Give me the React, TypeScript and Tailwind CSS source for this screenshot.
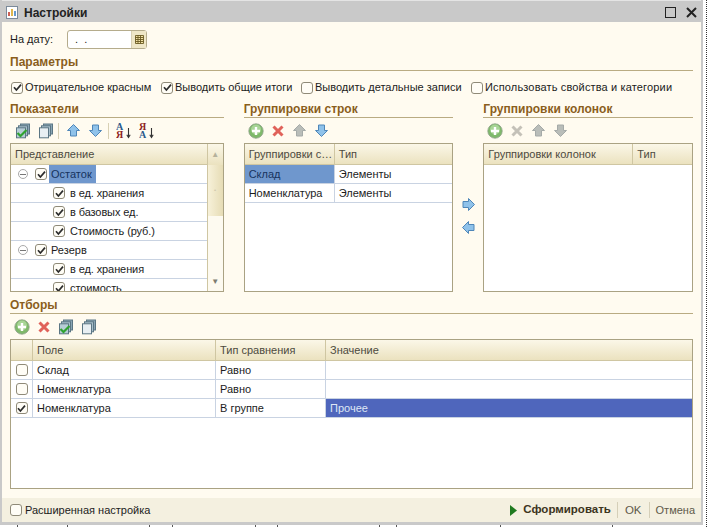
import type { ReactNode } from 'react';

const font = { fontFamily: '"Liberation Sans", Arial, sans-serif' };

function Check({ on = false }: { on?: boolean }) {
  return (
    <span className="flex h-[12px] w-[12px] shrink-0 items-center justify-center rounded-[3px] border border-[#8f8a78] bg-[#fffdf6]">
      {on && (
        <svg width="9" height="9" viewBox="0 0 9 9">
          <path d="M1 4.2 L3.4 7 L8 1.6" fill="none" stroke="#2c2c2c" strokeWidth="1.7" />
        </svg>
      )}
    </span>
  );
}

function Plus() {
  return (
    <svg width="16" height="16" viewBox="0 0 16 16">
      <circle cx="8" cy="8" r="7.2" fill="#7fb96b" stroke="#8c9f88" strokeWidth="0.8" />
      <circle cx="8" cy="6.5" r="5" fill="#a8d596" />
      <path d="M8 4v8M4 8h8" stroke="#fff" strokeWidth="2.4" />
    </svg>
  );
}

function Cross({ off = false }: { off?: boolean }) {
  return (
    <svg width="14" height="14" viewBox="0 0 14 14">
      <path d="M2.5 2.5 L11.5 11.5 M11.5 2.5 L2.5 11.5" stroke={off ? '#c4c1b8' : '#e0625a'} strokeWidth="3" />
    </svg>
  );
}

function Arrow({ dir, off = false }: { dir: 'up' | 'down' | 'left' | 'right'; off?: boolean }) {
  const rot = { up: 0, down: 180, left: 270, right: 90 }[dir];
  return (
    <svg width="15" height="15" viewBox="0 0 15 15" style={{ transform: `rotate(${rot}deg)` }}>
      <path
        d="M7.5 1.5 L13.5 7.5 L10.5 7.5 L10.5 13 L4.5 13 L4.5 7.5 L1.5 7.5 Z"
        fill={off ? '#b9bdb9' : '#8fc2ea'}
        stroke={off ? '#a5aaa8' : '#4f86b8'}
        strokeWidth="1"
      />
    </svg>
  );
}

function Stack({ checked = false }: { checked?: boolean }) {
  return (
    <svg width="16" height="16" viewBox="0 0 16 16">
      <rect x="5.5" y="1" width="9" height="10" fill="#8aa6b5" stroke="#5b7684" />
      <rect x="3.5" y="2.8" width="9" height="10" fill="#a9c0cc" stroke="#5b7684" />
      <rect x="1.5" y="4.8" width="9" height="10" fill={checked ? '#b7cdd6' : '#e8eff3'} stroke="#5b7684" />
      {checked && <path d="M2.5 10 L5.5 13 L11.5 7" fill="none" stroke="#2fa32f" strokeWidth="2.2" />}
    </svg>
  );
}

function Sort({ reverse = false }: { reverse?: boolean }) {
  const first = reverse ? 'Я' : 'А';
  const second = reverse ? 'А' : 'Я';
  const c1 = reverse ? '#8e1f1f' : '#2a5a8c';
  const c2 = reverse ? '#2a5a8c' : '#8e1f1f';
  return (
    <svg width="16" height="17" viewBox="0 0 16 17">
      <text x="0" y="8" fontSize="10" fontFamily="Liberation Serif" fontWeight="bold" fill={c1}>{first}</text>
      <text x="0" y="16" fontSize="10" fontFamily="Liberation Serif" fontWeight="bold" fill={c2}>{second}</text>
      <path d="M12.5 6v9M10.8 12.8 12.5 15.5 14.2 12.8" fill="none" stroke="#333" strokeWidth="1.1" />
    </svg>
  );
}

function Heading({ children }: { children: ReactNode }) {
  return (
    <div className="h-[15px] border-b border-[#b9ab82] text-[12px] font-bold leading-[13px] text-[#8a5e1c]">
      {children}
    </div>
  );
}

function Toolbar({ children, className = '' }: { children: ReactNode; className?: string }) {
  return <div className={`flex h-[25px] items-center ${className}`}>{children}</div>;
}

function HeadCell({ children, className = '' }: { children?: ReactNode; className?: string }) {
  return (
    <div className={`flex items-center whitespace-nowrap border-r border-[#cfc6a2] px-[4px] text-[#4d4a40] last:border-r-0 ${className}`}>
      {children}
    </div>
  );
}

const headBar = 'flex h-[21px] shrink-0 border-b border-[#cfc6a2] bg-gradient-to-b from-[#fbf7e8] to-[#ebe2bf]';

function TreeRow({ label, parent = false, selected = false }: { label: string; parent?: boolean; selected?: boolean }) {
  return (
    <div className={`flex h-[19px] shrink-0 items-center border-b border-[#c9d3e2] ${parent ? 'pl-[7px]' : 'pl-[42px] tracking-[-0.1px]'}`}>
      {parent && (
        <span className="mr-[7px] flex h-[10px] w-[10px] items-center justify-center rounded-full border border-[#a9a9a9]">
          <span className="h-px w-[6px] bg-[#777]" />
        </span>
      )}
      <Check on />
      <span className={`leading-[18px] ${parent ? 'ml-[2px] px-[2px]' : 'ml-[4px] px-[1px]'} ${selected ? 'bg-[#6f97cd] pr-[4px] text-[#16335e]' : ''}`}>{label}</span>
    </div>
  );
}

function GroupTable({ first, firstWidth, col, rows }: { first: string; firstWidth: string; col: string; rows: [string, string][] }) {
  return (
    <div className="h-[149px] border border-[#aaa283] bg-white">
      <div className={headBar}>
        <HeadCell className={firstWidth}>{first}</HeadCell>
        <HeadCell className="flex-1">{col}</HeadCell>
      </div>
      {rows.map(([a, b], i) => (
        <div key={a} className="flex h-[19px] border-b border-[#c9d3e2]">
          <div className={`${firstWidth} border-r border-[#c9d3e2] px-[4px] leading-[18px] ${i === 0 ? 'bg-[#6f97cd] text-[#17345f]' : ''}`}>{a}</div>
          <div className="flex-1 px-[4px] leading-[18px]">{b}</div>
        </div>
      ))}
    </div>
  );
}

const filters: [boolean, string, string, string][] = [
  [false, 'Склад', 'Равно', ''],
  [false, 'Номенклатура', 'Равно', ''],
  [true, 'Номенклатура', 'В группе', 'Прочее'],
];

// обрывки окна, что лежит под диалогом
const ticks = [17, 67, 149, 172, 255, 277, 379, 396, 500, 612];

export default function App() {
  return (
    <div className="flex h-[527px] w-[707px] flex-col overflow-hidden border-r border-dotted border-[#333] bg-white text-[11px] text-[#1c1c1c]" style={font}>
      <div className="flex h-[525px] w-[703px] shrink-0 flex-col border-b-[3px] border-l-2 border-r-2 border-[#c9c9c9] bg-[#fffbf0]">
        {/* заголовок */}
        <div className="flex h-[22px] shrink-0 items-center border-t border-[#e4e4e4] bg-[#c9c9c9] pl-[4px] pr-[4px] pt-[2px]">
          <svg width="12" height="13" viewBox="0 0 12 13">
            <rect x="0.5" y="0.5" width="11" height="12" fill="#fff" stroke="#7b8a9a" />
            <path d="M3 10V6" stroke="#c0392b" strokeWidth="1.6" />
            <path d="M6 10V3" stroke="#d9a520" strokeWidth="1.6" />
            <path d="M9 10V5" stroke="#3f7fc0" strokeWidth="1.6" />
          </svg>
          <span className="ml-[6px] text-[12px] font-bold text-[#222]">Настройки</span>
          <svg className="ml-auto" width="11" height="11" viewBox="0 0 11 11">
            <rect x="0.5" y="0.5" width="10" height="10" fill="none" stroke="#222" />
          </svg>
          <svg className="ml-[10px]" width="11" height="11" viewBox="0 0 11 11">
            <path d="M1 1L10 10M10 1L1 10" stroke="#222" strokeWidth="2" />
          </svg>
        </div>

        <div className="flex min-h-0 flex-1 flex-col px-[8px] pt-[8px]">
          <div className="flex h-[18px] items-center">
            <span className="w-[57px]">На дату:</span>
            <div className="flex h-[19px] w-[80px] items-center rounded-[3px] border border-[#b5ac8c] bg-white">
              <span className="flex-1 whitespace-pre pl-[7px] text-[11px]">.  .</span>
              <span className="flex h-full w-[15px] items-center justify-center border-l border-[#d8d0b4] bg-[#efe7c8]">
                <svg width="11" height="11" viewBox="0 0 11 11">
                  <path d="M1.5 1.5h8v8h-8zM1.5 3.5h8M1.5 5.5h8M1.5 7.5h8M4 1.5v8M6.5 1.5v8" fill="#f3e3a8" stroke="#6a5a22" strokeWidth="0.9" />
                </svg>
              </span>
            </div>
          </div>

          <div className="mt-[8px]"><Heading>Параметры</Heading></div>
          <div className="mt-[9px] flex h-[15px] items-center pl-[1px]">
            <label className="flex w-[150px] items-center gap-[2px]"><Check on />Отрицательное красным</label>
            <label className="flex w-[140px] items-center gap-[2px]"><Check on />Выводить общие итоги</label>
            <label className="flex w-[170px] items-center gap-[2px]"><Check />Выводить детальные записи</label>
            <label className="flex items-center gap-[2px] tracking-[0.15px]"><Check />Использовать свойства и категории</label>
          </div>

          <div className="mt-[8px] flex">
            <div className="w-[214px]">
              <Heading>Показатели</Heading>
              <Toolbar className="gap-[7px] pl-[5px]">
                <Stack checked />
                <Stack />
                <span className="-ml-[3px] h-[16px] w-px bg-[#d8d0b4]" />
                <Arrow dir="up" />
                <Arrow dir="down" />
                <span className="-ml-[2px] h-[16px] w-px bg-[#d8d0b4]" />
                <Sort />
                <Sort reverse />
              </Toolbar>
              <div className="flex h-[149px] border border-[#aaa283] bg-white">
                <div className="flex min-w-0 flex-1 flex-col overflow-hidden">
                  <div className={headBar}><HeadCell className="flex-1">Представление</HeadCell></div>
                  <TreeRow parent selected label="Остаток" />
                  <TreeRow label="в ед. хранения" />
                  <TreeRow label="в базовых ед." />
                  <TreeRow label="Стоимость (руб.)" />
                  <TreeRow parent label="Резерв" />
                  <TreeRow label="в ед. хранения" />
                  <TreeRow label="стоимость" />
                </div>
                <div className="flex w-[16px] shrink-0 flex-col border-l border-[#cfc6a2] bg-[#fdfaf0]">
                  <div className="flex h-[21px] items-center justify-center bg-gradient-to-b from-[#fbf7e8] to-[#ebe2bf] text-[8px] text-[#b5b19c]">▲</div>
                  <div className="flex h-[51px] items-center justify-center bg-gradient-to-r from-[#f7f1d9] to-[#e6dcb5] text-[6px] text-[#cfc8ac]">•</div>
                  <div className="flex-1" />
                  <div className="flex h-[18px] items-center justify-center text-[8px] text-[#7c7c70]">▼</div>
                </div>
              </div>
            </div>

            <div className="ml-[20px] w-[210px]">
              <Heading>Группировки строк</Heading>
              <Toolbar className="gap-[7px] pl-[4px]">
                <Plus />
                <Cross />
                <Arrow dir="up" off />
                <Arrow dir="down" />
              </Toolbar>
              <GroupTable first="Группировки с…" firstWidth="w-[90px]" col="Тип" rows={[['Склад', 'Элементы'], ['Номенклатура', 'Элементы']]} />
            </div>

            <div className="flex w-[30px] flex-col items-center gap-[8px] pt-[94px]">
              <Arrow dir="right" />
              <Arrow dir="left" />
            </div>

            <div className="w-[210px]">
              <Heading>Группировки колонок</Heading>
              <Toolbar className="gap-[7px] pl-[4px]">
                <Plus />
                <Cross off />
                <Arrow dir="up" off />
                <Arrow dir="down" off />
              </Toolbar>
              <GroupTable first="Группировки колонок" firstWidth="w-[149px]" col="Тип" rows={[]} />
            </div>
          </div>

          <div className="mt-[7px]"><Heading>Отборы</Heading></div>
          <Toolbar className="gap-[7px] pl-[4px]">
            <Plus />
            <Cross />
            <Stack checked />
            <Stack />
          </Toolbar>
          <div className="h-[150px] border border-[#aaa283] bg-white">
            <div className={headBar}>
              <HeadCell className="w-[22px]" />
              <HeadCell className="w-[183px]">Поле</HeadCell>
              <HeadCell className="w-[110px]">Тип сравнения</HeadCell>
              <HeadCell className="flex-1">Значение</HeadCell>
            </div>
            {filters.map(([on, field, cmp, val], i) => (
              <div key={i} className="flex h-[19px] border-b border-[#c9d3e2]">
                <div className="flex w-[22px] items-center justify-center border-r border-[#c9d3e2]"><Check on={on} /></div>
                <div className="w-[183px] border-r border-[#c9d3e2] px-[4px] leading-[18px]">{field}</div>
                <div className="w-[110px] border-r border-[#c9d3e2] px-[4px] leading-[18px]">{cmp}</div>
                <div className={`flex-1 px-[4px] leading-[18px] ${val ? 'bg-[#4f66bc] text-[#dfe6f5]' : ''}`}>{val}</div>
              </div>
            ))}
          </div>
        </div>

        {/* низ окна */}
        <div className="flex h-[24px] shrink-0 items-center bg-[#f4f0e0] pl-[8px] pr-[6px]">
          <label className="flex items-center gap-[3px]"><Check />Расширенная настройка</label>
          <div className="ml-auto flex items-center text-[#5f5a4a]">
            <svg width="7" height="11" viewBox="0 0 7 11"><path d="M0 0L7 5.5L0 11Z" fill="#1f7a1f" /></svg>
            <span className="ml-[6px] pr-[6px] text-[11.5px] font-bold text-[#3c3420]">Сформировать</span>
            <span className="border-l border-[#d5cfb8] px-[7px] text-[11.5px] leading-[16px]">OK</span>
            <span className="border-l border-[#d5cfb8] pl-[6px] leading-[16px]">Отмена</span>
          </div>
        </div>
      </div>
      <div className="flex h-[2px]">
        {ticks.map((x, i) => (
          <span key={x} className="h-[2px] w-px shrink-0 bg-[#555]" style={{ marginLeft: x - (i ? ticks[i - 1] + 1 : 0) }} />
        ))}
      </div>
    </div>
  );
}
